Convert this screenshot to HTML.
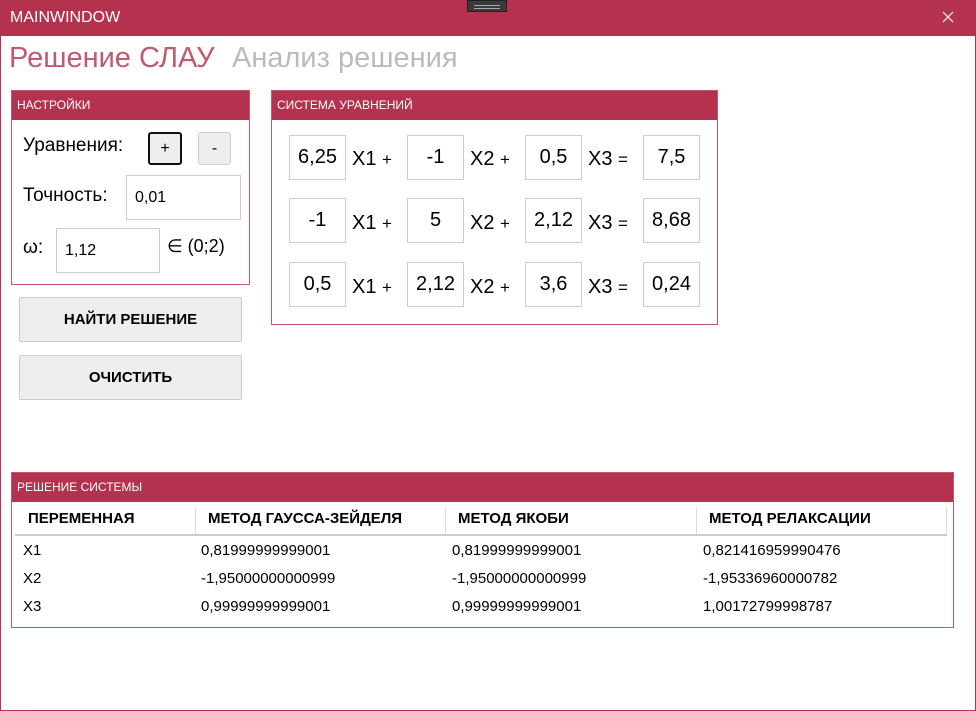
<!DOCTYPE html>
<html><head><meta charset="utf-8"><style>
*{box-sizing:border-box;margin:0;padding:0}
body{width:976px;height:711px;position:relative;font-family:"Liberation Sans",sans-serif;background:#fff;overflow:hidden}
.a{position:absolute}
.frame{left:0;top:0;width:976px;height:711px;border:1px solid #b5324f}
.tb{left:0;top:0;width:976px;height:36px;background:#b5324f;color:#fff;font-size:16px}
.box{border:1px solid #c4556c;position:absolute}
.hd{background:#b5324f;color:#fff;font-size:12px;height:29px;line-height:29px;padding-left:5px}
.in{position:absolute;border:1px solid #ccc;background:#fff;font-size:20px;text-align:center;width:57px;height:45px;line-height:43px}
.lb{position:absolute;font-size:20px}
.btn{position:absolute;left:19px;width:223px;height:45px;background:#eeeeee;border:1px solid #ccc;border-radius:2px;font-weight:bold;font-size:15px;text-align:center;line-height:43px}
.th{position:absolute;top:37px;font-size:15px;font-weight:bold}
.td{position:absolute;font-size:15px}
</style></head><body>
<div class="a frame"></div>
<div class="a tb"><span class="a" style="left:10px;top:9px">MAINWINDOW</span>
<div class="a" style="left:467px;top:0;width:40px;height:12px;background:#3a3a3a;border:1px solid #222"><div class="a" style="left:6px;top:4px;width:26px;height:1px;background:#aaa"></div><div class="a" style="left:6px;top:7px;width:26px;height:1px;background:#aaa"></div></div>
<svg class="a" style="left:942px;top:11px" width="12" height="12"><path d="M1 1L11 11M11 1L1 11" stroke="#fff" stroke-width="1.2"/></svg></div>
<div class="a" style="left:9px;top:42px;font-size:29px;color:#bf5a6f">Решение СЛАУ</div>
<div class="a" style="left:232px;top:42px;font-size:29px;color:#bbb">Анализ решения</div>

<div class="box" style="left:11px;top:90px;width:239px;height:195px"><div class="hd">НАСТРОЙКИ</div>
<div class="lb" style="left:11px;top:44px;font-size:19px">Уравнения:</div>
<div class="a" style="left:136px;top:41px;width:34px;height:33px;border:2px solid #111;border-radius:3px;background:#eee;text-align:center;line-height:29px;font-size:16px">+</div>
<div class="a" style="left:186px;top:41px;width:33px;height:33px;border:1px solid #ccc;border-radius:3px;background:#eee;text-align:center;line-height:31px;font-size:16px">-</div>
<div class="lb" style="left:11px;top:94px;font-size:19px">Точность:</div>
<div class="in" style="left:114px;top:84px;width:115px;font-size:16px;text-align:left;padding-left:8px">0,01</div>
<div class="lb" style="left:11px;top:146px;font-size:19px">ω:</div>
<div class="in" style="left:44px;top:137px;width:104px;font-size:16px;text-align:left;padding-left:8px">1,12</div>
<div class="lb" style="left:155px;top:145px;font-size:18px">∈ (0;2)</div>
</div>
<div class="btn" style="top:297px">НАЙТИ РЕШЕНИЕ</div>
<div class="btn" style="top:355px">ОЧИСТИТЬ</div>

<div class="box" style="left:271px;top:90px;width:447px;height:235px"><div class="hd">СИСТЕМА УРАВНЕНИЙ</div></div>
<div class="in" style="left:289px;top:135px">6,25</div><div class="lb" style="left:352px;top:148px">X1 <span style="font-size:17px">+</span></div>
<div class="in" style="left:407px;top:135px">-1</div><div class="lb" style="left:470px;top:148px">X2 <span style="font-size:17px">+</span></div>
<div class="in" style="left:525px;top:135px">0,5</div><div class="lb" style="left:588px;top:148px">X3 <span style="font-size:17px">=</span></div>
<div class="in" style="left:643px;top:135px">7,5</div>
<div class="in" style="left:289px;top:198px">-1</div><div class="lb" style="left:352px;top:212px">X1 <span style="font-size:17px">+</span></div>
<div class="in" style="left:407px;top:198px">5</div><div class="lb" style="left:470px;top:212px">X2 <span style="font-size:17px">+</span></div>
<div class="in" style="left:525px;top:198px">2,12</div><div class="lb" style="left:588px;top:212px">X3 <span style="font-size:17px">=</span></div>
<div class="in" style="left:643px;top:198px">8,68</div>
<div class="in" style="left:289px;top:262px">0,5</div><div class="lb" style="left:352px;top:276px">X1 <span style="font-size:17px">+</span></div>
<div class="in" style="left:407px;top:262px">2,12</div><div class="lb" style="left:470px;top:276px">X2 <span style="font-size:17px">+</span></div>
<div class="in" style="left:525px;top:262px">3,6</div><div class="lb" style="left:588px;top:276px">X3 <span style="font-size:17px">=</span></div>
<div class="in" style="left:643px;top:262px">0,24</div>

<div class="box" style="left:11px;top:472px;width:943px;height:156px"><div class="hd">РЕШЕНИЕ СИСТЕМЫ</div>
<div class="a" style="left:3px;top:61px;width:932px;height:2px;background:#ccc"></div>
<div class="a" style="left:183px;top:34px;width:1px;height:27px;background:#ddd"></div>
<div class="a" style="left:433px;top:34px;width:1px;height:27px;background:#ddd"></div>
<div class="a" style="left:684px;top:34px;width:1px;height:27px;background:#ddd"></div>
<div class="a" style="left:934px;top:34px;width:1px;height:27px;background:#ddd"></div>
<div class="th" style="left:16px">ПЕРЕМЕННАЯ</div><div class="th" style="left:196px">МЕТОД ГАУССА-ЗЕЙДЕЛЯ</div><div class="th" style="left:446px">МЕТОД ЯКОБИ</div><div class="th" style="left:697px">МЕТОД РЕЛАКСАЦИИ</div>
<div class="td" style="left:11px;top:69px">X1</div><div class="td" style="left:189px;top:69px">0,81999999999001</div><div class="td" style="left:440px;top:69px">0,81999999999001</div><div class="td" style="left:691px;top:69px">0,821416959990476</div>
<div class="td" style="left:11px;top:97px">X2</div><div class="td" style="left:189px;top:97px">-1,95000000000999</div><div class="td" style="left:440px;top:97px">-1,95000000000999</div><div class="td" style="left:691px;top:97px">-1,95336960000782</div>
<div class="td" style="left:11px;top:125px">X3</div><div class="td" style="left:189px;top:125px">0,99999999999001</div><div class="td" style="left:440px;top:125px">0,99999999999001</div><div class="td" style="left:691px;top:125px">1,00172799998787</div>
</div>
</body></html>
